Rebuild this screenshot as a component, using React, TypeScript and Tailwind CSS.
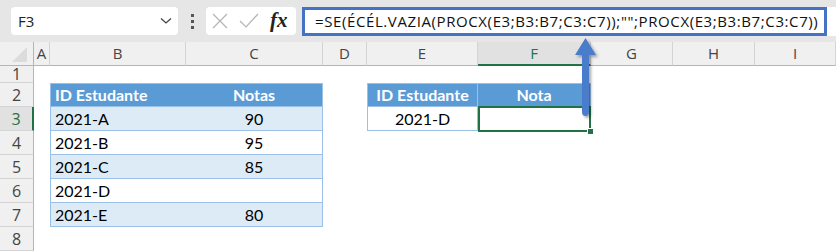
import React from 'react';

const cols = ['', 'A', 'B', 'C', 'D', 'E', 'F', 'G', 'H', 'I'];

type Cell = { text?: string; cls?: string };

const HEAD = 'bg-[#5b9bd5] text-white font-bold';
const LIGHT = 'bg-[#ddebf7]';
const EDGE = 'border-[#9bc2e6]';

// rows 2..7 of the sheet, indexed by column letter
const sheet: Record<number, Record<string, Cell>> = {
  2: {
    B: { text: 'ID Estudante', cls: `${HEAD} border-l border-t border-b ${EDGE} pl-[4px]` },
    C: { text: 'Notas', cls: `${HEAD} border-r border-t border-b ${EDGE} justify-center` },
    E: { text: 'ID Estudante', cls: `${HEAD} border-l border-t border-b border-r ${EDGE} justify-center` },
    F: { text: 'Nota', cls: `${HEAD} border-t border-b border-r ${EDGE} justify-center` },
  },
  3: {
    B: { text: '2021-A', cls: `${LIGHT} border-l border-b ${EDGE} pl-[4px]` },
    C: { text: '90', cls: `${LIGHT} border-r border-b ${EDGE} justify-center` },
    E: { text: '2021-D', cls: `bg-white border-l border-r border-b ${EDGE} justify-center` },
  },
  4: {
    B: { text: '2021-B', cls: `bg-white border-l border-b ${EDGE} pl-[4px]` },
    C: { text: '95', cls: `bg-white border-r border-b ${EDGE} justify-center` },
  },
  5: {
    B: { text: '2021-C', cls: `${LIGHT} border-l border-b ${EDGE} pl-[4px]` },
    C: { text: '85', cls: `${LIGHT} border-r border-b ${EDGE} justify-center` },
  },
  6: {
    B: { text: '2021-D', cls: `bg-white border-l border-b ${EDGE} pl-[4px]` },
    C: { text: '', cls: `bg-white border-r border-b ${EDGE} justify-center` },
  },
  7: {
    B: { text: '2021-E', cls: `${LIGHT} border-l border-b ${EDGE} pl-[4px]` },
    C: { text: '80', cls: `${LIGHT} border-r border-b ${EDGE} justify-center` },
  },
};

const rowHeights = [17, 24, 24, 24, 24, 24, 24, 24];

export default function App() {
  return (
    <div className="relative w-[836px] h-[252px] overflow-hidden bg-white font-['Lato',sans-serif] text-black">
      {/* formula bar */}
      <div className="flex items-center h-[42px] bg-[#e6e6e6]">
        <div className="ml-[11px] w-[167px] h-[28px] rounded-[4px] bg-white flex items-center justify-between pl-[7px] pr-[6px] font-['Open_Sans',sans-serif] text-[15px] text-[#222]">
          <span>F3</span>
          <svg width="12" height="8" viewBox="0 0 12 8"><path d="M1 1.5 L6 6 L11 1.5" fill="none" stroke="#444" strokeWidth="1.3" /></svg>
        </div>
        <div className="w-[28px] flex flex-col items-center gap-[3px]">
          <span className="w-[3px] h-[3px] bg-[#555]" />
          <span className="w-[3px] h-[3px] bg-[#555]" />
          <span className="w-[3px] h-[3px] bg-[#555]" />
        </div>
        <div className="w-[90px] h-[28px] rounded-[4px] bg-white flex items-center pl-[6px] gap-[11px]">
          <svg width="16" height="16" viewBox="0 0 16 16"><path d="M1 1 L15 15 M15 1 L1 15" stroke="#b4b4b4" strokeWidth="1.2" fill="none" /></svg>
          <svg width="20" height="16" viewBox="0 0 20 16"><path d="M1 8 L7 14 L19 1" stroke="#b4b4b4" strokeWidth="1.2" fill="none" /></svg>
          <span className="font-['Liberation_Serif',serif] italic font-bold text-[21px] leading-none text-[#222] -mt-[2px]">fx</span>
        </div>
        <div className="ml-[6px] flex-1 h-[29px] bg-white">
          <div className="w-[525px] h-[29px] border-[3px] border-[#4472c4] flex items-center pl-[10px] font-['Open_Sans',sans-serif] text-[15px] tracking-[0.6px] text-[#111] whitespace-nowrap">
            =SE(ÉCÉL.VAZIA(PROCX(E3;B3:B7;C3:C7));"";PROCX(E3;B3:B7;C3:C7))
          </div>
        </div>
      </div>

      {/* sheet */}
      <div className="grid grid-cols-[34px_16px_136px_137px_44px_111px_113px_82px_82px_81px]">
        {cols.map((c, i) => (
          <div
            key={'h' + i}
            className={`h-[24px] flex items-center justify-center font-['Open_Sans',sans-serif] text-[15px] border-b ${
              c === 'F'
                ? 'bg-[#e1e1e1] text-[#217346] border-b-2 border-b-[#217346]'
                : 'bg-[#f0f0f0] text-[#444] border-b-[#b5b5b5]'
            } ${i === 0 ? 'border-r border-r-[#b5b5b5]' : 'border-r border-r-[#d4d4d4]'}`}
          >
            {i === 0 ? (
              <svg width="15" height="15" viewBox="0 0 15 15" className="ml-[6px] mt-[2px]"><path d="M15 0 L15 15 L0 15 Z" fill="#dcdcdc" /></svg>
            ) : (
              c
            )}
          </div>
        ))}
        {rowHeights.map((h, r) => {
          const row = r + 1;
          return cols.map((c, i) => {
            if (i === 0) {
              const sel = row === 3;
              return (
                <div
                  key={`${row}-${i}`}
                  style={{ height: h }}
                  className={`flex items-center justify-center font-['Open_Sans',sans-serif] text-[16px] border-b border-b-[#d4d4d4] ${
                    sel ? 'bg-[#e1e1e1] text-[#217346] border-r-2 border-r-[#217346]' : 'bg-[#f0f0f0] text-[#444] border-r border-r-[#b5b5b5]'
                  }`}
                >
                  {row}
                </div>
              );
            }
            const cell = sheet[row]?.[c];
            return (
              <div key={`${row}-${i}`} style={{ height: h }} className={`flex items-center text-[16px] ${cell?.cls ?? ''}`}>
                {cell?.text}
              </div>
            );
          });
        })}
      </div>

      {/* active cell F3 */}
      <div className="absolute left-[478px] top-[106px] w-[113px] h-[26px] border-2 border-[#217346]" />
      <div className="absolute left-[588px] top-[129px] w-[5px] h-[5px] bg-[#217346] outline outline-1 outline-white" />

      {/* callout arrow */}
      <svg className="absolute left-[570px] top-[30px]" width="36" height="96" viewBox="0 0 36 96">
        <defs>
          <filter id="sh" x="-50%" y="-20%" width="200%" height="140%">
            <feDropShadow dx="2" dy="2" stdDeviation="1.5" floodColor="#000" floodOpacity="0.35" />
          </filter>
        </defs>
        <path
          d="M15.5 8 L26 25 L19 25 L19 82 Q19 86 15.5 86 Q12 86 12 82 L12 25 L5 25 Z"
          fill="#4a7ccb"
          filter="url(#sh)"
        />
      </svg>
    </div>
  );
}
